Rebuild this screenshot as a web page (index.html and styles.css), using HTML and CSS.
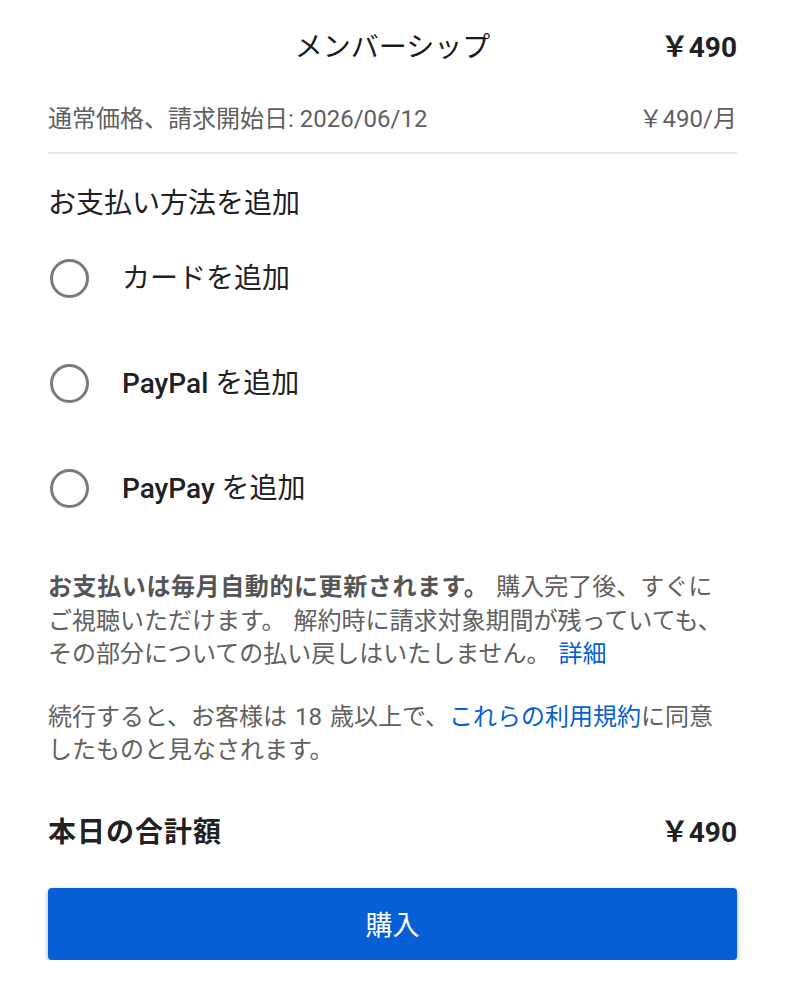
FILE: index.html
```html
<!DOCTYPE html>
<html lang="ja">
<head>
<meta charset="utf-8">
<title>メンバーシップ</title>
<link rel="stylesheet" href="styles.css">
</head>
<body>
<div class="page">
  <header class="top">
    <span class="spacer"></span>
    <h1 class="title">メンバーシップ</h1>
    <span class="price">￥490</span>
  </header>
  <div class="sub">
    <span>通常価格、請求開始日: 2026/06/12</span>
    <span>￥490/月</span>
  </div>
  <hr class="divider">
  <h2 class="section">お支払い方法を追加</h2>
  <ul class="options">
    <li class="option"><span class="radio"></span><span class="label">カードを追加</span></li>
    <li class="option"><span class="radio"></span><span class="label"><span class="latin">PayPal</span> を追加</span></li>
    <li class="option"><span class="radio"></span><span class="label"><span class="latin">PayPay</span> を追加</span></li>
  </ul>
  <p class="note"><b>お支払いは毎月自動的に更新されます。</b> 購入完了後、すぐに<br>ご視聴いただけます。 解約時に請求対象期間が残っていても、<br>その部分についての払い戻しはいたしません。 <a class="link" href="#">詳細</a></p>
  <p class="note">続行すると、お客様は 18 歳以上で、<a class="link" href="#">これらの利用規約</a>に同意<br>したものと見なされます。</p>
  <div class="total">
    <span class="total-label">本日の合計額</span>
    <span>￥490</span>
  </div>
  <button class="buy" type="button">購入</button>
</div>
</body>
</html>
```

FILE: styles.css
```css
* { box-sizing: border-box; }

body {
  margin: 0;
  background: #ffffff;
  font-family: Roboto, "Noto Sans CJK JP", sans-serif;
  color: #212121;
}

.page {
  padding: 29px 49px 0 48px;
}

.top {
  display: grid;
  grid-template-columns: 1fr auto 1fr;
  align-items: center;
  height: 38px;
}

.title {
  margin: 0;
  font-size: 28px;
  font-weight: 400;
  line-height: 38px;
  color: #1a1a1a;
}

.price {
  justify-self: end;
  font-size: 28px;
  font-weight: 700;
  line-height: 38px;
}

.sub {
  display: flex;
  justify-content: space-between;
  margin-top: 35px;
  font-size: 24px;
  line-height: 34px;
  color: #606060;
}

.divider {
  margin: 16px 0 0;
  border: 0;
  height: 2px;
  background: #e5e5e5;
}

.section {
  margin: 31px 0 0;
  font-size: 28px;
  font-weight: 400;
  line-height: 38px;
}

.options {
  list-style: none;
  margin: 3px 0 0;
  padding: 0;
}

.option {
  display: flex;
  align-items: center;
  gap: 31px;
  height: 105px;
  font-size: 28px;
  line-height: 38px;
}

.radio {
  width: 43px;
  display: flex;
  justify-content: center;
}

.radio::before {
  content: "";
  width: 33px;
  height: 33px;
  border: 3px solid #7a7a7a;
  border-radius: 50%;
}

.latin {
  font-weight: 500;
}

.note {
  margin: 30px 0 0;
  font-size: 24px;
  line-height: 33.5px;
  color: #606060;
  word-spacing: 2px;
  white-space: nowrap;
}

.note b {
  font-weight: 700;
  color: #555555;
  letter-spacing: 0.6px;
}

.note + .note {
  margin-top: 29px;
}

.link {
  color: #065fd4;
  text-decoration: none;
}

.total {
  display: flex;
  justify-content: space-between;
  align-items: center;
  margin-top: 46px;
  font-size: 28px;
  font-weight: 700;
  line-height: 38px;
}

.total-label {
  font-size: 28px;
  letter-spacing: 1px;
}

.buy {
  display: block;
  width: 100%;
  height: 72px;
  margin-top: 36px;
  border: 0;
  border-radius: 4px;
  background: #065fd4;
  color: #ffffff;
  font-family: Roboto, "Noto Sans CJK JP", sans-serif;
  font-size: 27px;
  font-weight: 400;
  box-shadow: 0 2px 5px rgba(0, 0, 0, 0.35);
}
```
